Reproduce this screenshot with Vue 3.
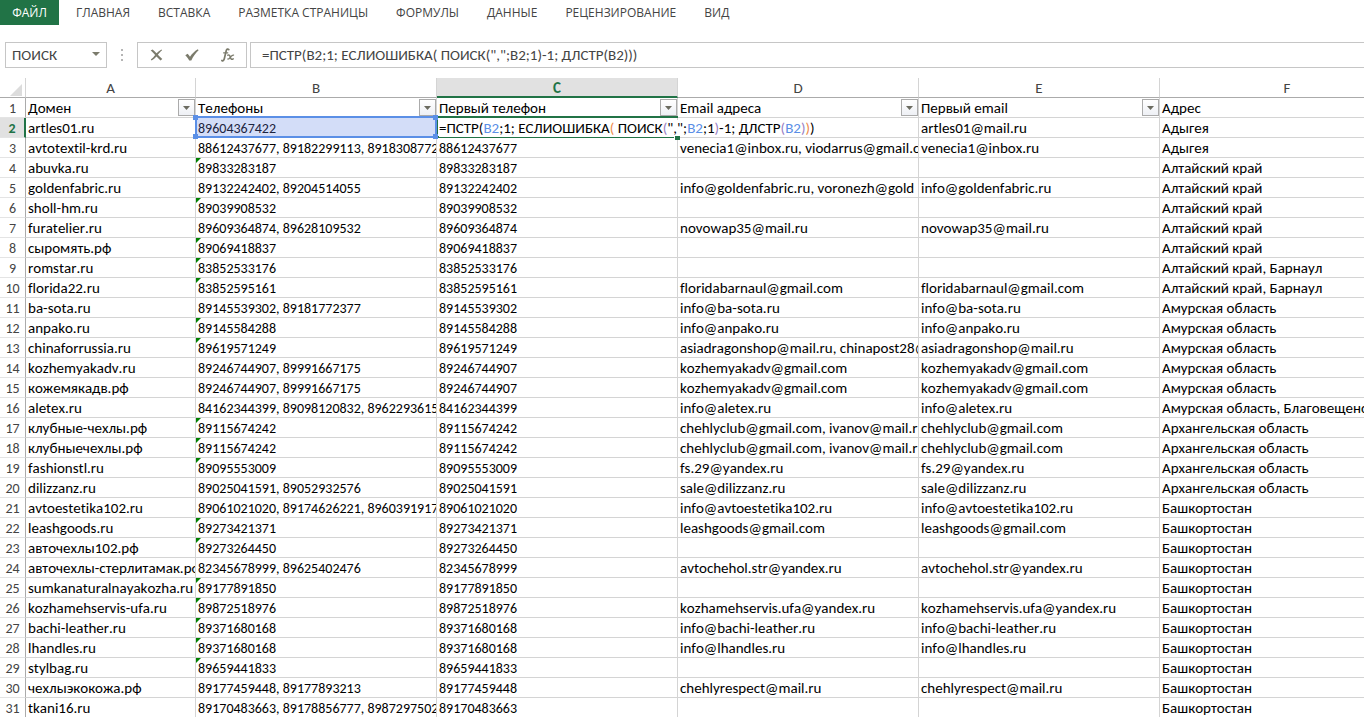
<script setup>
import { ref } from 'vue'

const tabs = ['ГЛАВНАЯ', 'ВСТАВКА', 'РАЗМЕТКА СТРАНИЦЫ', 'ФОРМУЛЫ', 'ДАННЫЕ', 'РЕЦЕНЗИРОВАНИЕ', 'ВИД']
const columns = ['A', 'B', 'C', 'D', 'E', 'F']
const headings = ['Домен', 'Телефоны', 'Первый телефон', 'Email адреса', 'Первый email', 'Адрес']

const formula = ref('=ПСТР(B2;1; ЕСЛИОШИБКА( ПОИСК(",";B2;1)-1; ДЛСТР(B2)))')
const tokens = [
  ['=ПСТР(', 'plain'], ['B2', 'cellref'], [';1; ЕСЛИОШИБКА', 'plain'], ['(', 'orange'],
  [' ПОИСК', 'plain'], ['(', 'violet'], ['",";', 'plain'], ['B2', 'cellref'], [';1', 'plain'],
  [')', 'violet'], ['-1; ДЛСТР', 'plain'], ['(', 'violet'], ['B2', 'cellref'], [')', 'violet'],
  [')', 'orange'], [')', 'plain'],
]

// domain, phones, emails, address
const source = [
  ['artles01.ru', '89604367422', 'artles01@mail.ru', 'Адыгея'],
  ['avtotextil-krd.ru', '88612437677, 89182299113, 8918308772', 'venecia1@inbox.ru, viodarrus@gmail.c', 'Адыгея'],
  ['abuvka.ru', '89833283187', '', 'Алтайский край'],
  ['goldenfabric.ru', '89132242402, 89204514055', 'info@goldenfabric.ru, voronezh@gold', 'Алтайский край'],
  ['sholl-hm.ru', '89039908532', '', 'Алтайский край'],
  ['furatelier.ru', '89609364874, 89628109532', 'novowap35@mail.ru', 'Алтайский край'],
  ['сыромять.рф', '89069418837', '', 'Алтайский край'],
  ['romstar.ru', '83852533176', '', 'Алтайский край, Барнаул'],
  ['florida22.ru', '83852595161', 'floridabarnaul@gmail.com', 'Алтайский край, Барнаул'],
  ['ba-sota.ru', '89145539302, 89181772377', 'info@ba-sota.ru', 'Амурская область'],
  ['anpako.ru', '89145584288', 'info@anpako.ru', 'Амурская область'],
  ['chinaforrussia.ru', '89619571249', 'asiadragonshop@mail.ru, chinapost28@', 'Амурская область'],
  ['kozhemyakadv.ru', '89246744907, 89991667175', 'kozhemyakadv@gmail.com', 'Амурская область'],
  ['кожемякадв.рф', '89246744907, 89991667175', 'kozhemyakadv@gmail.com', 'Амурская область'],
  ['aletex.ru', '84162344399, 89098120832, 8962293615', 'info@aletex.ru', 'Амурская область, Благовещенск'],
  ['клубные-чехлы.рф', '89115674242', 'chehlyclub@gmail.com, ivanov@mail.r', 'Архангельская область'],
  ['клубныечехлы.рф', '89115674242', 'chehlyclub@gmail.com, ivanov@mail.r', 'Архангельская область'],
  ['fashionstl.ru', '89095553009', 'fs.29@yandex.ru', 'Архангельская область'],
  ['dilizzanz.ru', '89025041591, 89052932576', 'sale@dilizzanz.ru', 'Архангельская область'],
  ['avtoestetika102.ru', '89061021020, 89174626221, 8960391917', 'info@avtoestetika102.ru', 'Башкортостан'],
  ['leashgoods.ru', '89273421371', 'leashgoods@gmail.com', 'Башкортостан'],
  ['авточехлы102.рф', '89273264450', '', 'Башкортостан'],
  ['авточехлы-стерлитамак.рф', '82345678999, 89625402476', 'avtochehol.str@yandex.ru', 'Башкортостан'],
  ['sumkanaturalnayakozha.ru', '89177891850', '', 'Башкортостан'],
  ['kozhamehservis-ufa.ru', '89872518976', 'kozhamehservis.ufa@yandex.ru', 'Башкортостан'],
  ['bachi-leather.ru', '89371680168', 'info@bachi-leather.ru', 'Башкортостан'],
  ['lhandles.ru', '89371680168', 'info@lhandles.ru', 'Башкортостан'],
  ['stylbag.ru', '89659441833', '', 'Башкортостан'],
  ['чехлыэкокожа.рф', '89177459448, 89177893213', 'chehlyrespect@mail.ru', 'Башкортостан'],
  ['tkani16.ru', '89170483663, 89178856777, 8987297502', '', 'Башкортостан'],
]
const first = (list) => list.split(', ')[0]
const rows = source.map(([domain, phones, emails, address], i) => ({
  number: i + 2,
  domain,
  phones,
  phone: first(phones),
  emails,
  email: first(emails),
  address,
  flagged: i > 0 && !phones.includes(','),
}))
</script>

<template>
  <div class="app">
    <nav class="ribbon" aria-label="Лента">
      <button class="tab file" type="button">ФАЙЛ</button>
      <div class="tabs">
        <button v-for="tab in tabs" :key="tab" class="tab" type="button">{{ tab }}</button>
      </div>
    </nav>

    <div class="bar">
      <div class="namebox">
        <select aria-label="Имя">
          <option>ПОИСК</option>
        </select>
        <svg class="caret" width="8" height="4" viewBox="0 0 8 4"><path d="M0 0h8L4 4z" fill="#7b7b6c" /></svg>
      </div>
      <svg class="grip" width="2" height="12" viewBox="0 0 2 12">
        <path d="M0 0h2v2H0zM0 5h2v2H0zM0 10h2v2H0z" fill="#b5b5b5" />
      </svg>
      <div class="actions">
        <button type="button" aria-label="Отмена">
          <svg width="13" height="12" viewBox="0 0 13 12">
            <path d="M.6 1.600 2.600.5C4 1.700 5.200 3 6.500 4.300 8 2.800 9.500 1.500 11.500.4l.6.8C10.300 2.700 9.200 4.100 7.900 5.800 9.200 7.200 10.500 8.500 12.300 9.900l-1.800 1.500C9.100 10.200 7.800 8.900 6.500 7.500 5 9.100 3.500 10.400 1.600 11.500L.8 10.600C2.600 9.200 3.900 7.700 5.100 6 3.800 4.400 2.500 3.100.6 1.600z" fill="#7b7b6c" />
          </svg>
        </button>
        <button type="button" aria-label="Ввод">
          <svg width="14" height="12" viewBox="0 0 14 12">
            <path d="M.3 6.200 2.600 4.800c1 1 1.700 1.900 2.400 3C7 4.800 9.400 2.300 12.800.3l.8.9C10.500 4 8.200 7.400 6.300 11.500H4.200C3.100 9.400 1.900 7.700.3 6.200z" fill="#7b7b6c" />
          </svg>
        </button>
        <button type="button" aria-label="Вставить функцию">
          <svg width="14" height="14" viewBox="0 0 14 14" fill="none" stroke="#7b7b6c" stroke-linecap="round">
            <path d="M7.800 1.600C6.900.6 5.700.9 5.200 2.800L3.300 10.800C2.900 12.500 1.900 13.300.9 12.500" stroke-width="1.700" />
            <path d="M2.600 4.800h4.200" stroke-width="1.200" />
            <path d="M6.800 7.200c1.400-.7 2 .2 2.500 1.900.5 1.900 1.200 2.800 2.900 1.800" stroke-width="1.500" />
            <path d="M12.600 7.100c-1.400-.3-2.100.7-3.100 2-.9 1.300-1.600 2.200-2.800 1.900" stroke-width="1.200" />
          </svg>
        </button>
      </div>
      <input v-model="formula" class="formula" type="text" aria-label="Строка формул" />
    </div>

    <main class="sheet">
      <table>
        <colgroup>
          <col class="w-number" />
          <col class="w-domain" />
          <col v-for="n in 4" :key="n" class="w-data" />
          <col class="w-address" />
        </colgroup>
        <thead>
          <tr>
            <th class="corner">
              <svg width="12" height="12" viewBox="0 0 12 12"><path d="M12 0v12H0z" fill="#dcdcdc" /></svg>
            </th>
            <th v-for="c in columns" :key="c" scope="col" :class="{ current: c === 'C' }">{{ c }}</th>
          </tr>
        </thead>
        <tbody>
          <tr>
            <th scope="row">1</th>
            <td v-for="(h, i) in headings" :key="h">
              {{ h }}
              <button v-if="i < 5" class="filter" type="button" :aria-label="'Фильтр: ' + h">
                <svg width="7" height="4" viewBox="0 0 7 4"><path d="M0 0h7L3.500 4z" fill="#6b6b60" /></svg>
              </button>
            </td>
          </tr>
          <tr v-for="r in rows" :key="r.number">
            <th scope="row" :class="{ current: r.number === 2 }">{{ r.number }}</th>
            <td>{{ r.domain }}</td>
            <td class="phone" :class="{ flagged: r.flagged, source: r.number === 2 }">
              {{ r.phones }}
              <span v-if="r.number === 2" class="frame"><i /><i /><i /><i /></span>
            </td>
            <td v-if="r.number === 2" class="editing">
              <span class="tokens"><span v-for="(t, i) in tokens" :key="i" :class="t[1]">{{ t[0] }}</span></span>
              <span class="outline"></span>
              <i class="handle"></i>
            </td>
            <td v-else class="phone">{{ r.phone }}</td>
            <td>{{ r.number === 2 ? '' : r.emails }}</td>
            <td>{{ r.email }}</td>
            <td>{{ r.address }}</td>
          </tr>
        </tbody>
      </table>
    </main>
  </div>
</template>

<style>
body {
  margin: 0;
  background: #fff;
}
</style>

<style scoped>
.app {
  display: flex;
  flex-direction: column;
  height: 100vh;
  overflow: hidden;
  font-family: Calibri, Carlito, Lato, "Noto Sans", sans-serif;
  font-size: 15px;
  font-kerning: none;
  font-variant-ligatures: none;
  color: #000;
}
button,
input,
select {
  margin: 0;
  padding: 0;
  border: 0;
  border-radius: 0;
  background: none;
  font: inherit;
  color: #444;
}
.ribbon {
  display: flex;
  flex: none;
  height: 25px;
}
.tabs {
  display: flex;
  gap: 28px;
  padding-left: 17px;
}
.tab {
  font-family: "Open Sans", "Noto Sans", sans-serif;
  font-size: 12px;
  white-space: nowrap;
}
.file {
  width: 59px;
  background: #217346;
  color: #fff;
}
.bar {
  display: flex;
  flex: none;
  align-items: center;
  height: 26px;
  margin: 17px 0 10px 5px;
}
.namebox,
.actions,
.formula {
  box-sizing: border-box;
  height: 26px;
  border: 1px solid #c6c6c6;
}
.namebox {
  display: flex;
  align-items: center;
  position: relative;
  width: 102px;
}
.namebox select {
  width: 100%;
  height: 100%;
  padding-left: 6px;
  appearance: none;
}
.caret {
  position: absolute;
  right: 6px;
  top: 9px;
  pointer-events: none;
}
.grip {
  margin: 0 14px;
}
.actions {
  display: flex;
  align-items: center;
  width: 110px;
  margin-right: 3px;
}
.actions button {
  display: flex;
  flex: 1;
  align-items: center;
  justify-content: center;
  height: 100%;
}
.formula {
  flex: 1;
  min-width: 0;
  padding-left: 11px;
  border-right: 0;
}
.sheet {
  flex: 1;
  min-height: 0;
  overflow: hidden;
}
table {
  width: 1415px;
  table-layout: fixed;
  border-collapse: separate;
  border-spacing: 0;
}
.w-number { width: 26px; }
.w-domain { width: 170px; }
.w-data { width: 241px; }
.w-address { width: 255px; }
th,
td {
  box-sizing: border-box;
  height: 20px;
  padding: 2px 0 0;
  border: 0 solid #d4d4d4;
  border-width: 0 1px 1px 0;
  line-height: 17px;
  white-space: nowrap;
}
td {
  position: relative;
  padding-left: 2px;
  overflow: hidden;
  text-align: left;
}
th {
  font-weight: 400;
  color: #444;
}
thead th {
  border-bottom-color: #ababab;
}
thead th.current {
  border-bottom: 2px solid #217346;
  background: #e1e1e1;
  color: #217346;
  font-weight: 700;
  line-height: 16px;
}
.corner svg {
  display: block;
  margin: 2px 3px 0 auto;
}
tbody th {
  border-right-color: #ababab;
  border-bottom-color: #e4e4e4;
}
tbody th.current {
  border-right: 2px solid #217346;
  background: #e1e1e1;
  color: #217346;
  font-weight: 700;
}
tbody th,
.phone {
  font-size: 14px;
}
.flagged::before {
  content: "";
  position: absolute;
  left: 0;
  top: 0;
  border-top: 5px solid #008000;
  border-right: 5px solid transparent;
}
.filter {
  display: flex;
  align-items: center;
  justify-content: center;
  position: absolute;
  right: 0;
  top: 1px;
  box-sizing: border-box;
  width: 17px;
  height: 17px;
  border: 1px solid #ababab;
  background: linear-gradient(#fff, #eef0f5);
}
.source {
  overflow: visible;
  background: #d3ddf8;
  color: #1c2440;
}
.frame {
  position: absolute;
  inset: -2px -1px -1px -1px;
  z-index: 3;
  border: 2px solid #5b8fe6;
}
.frame i {
  position: absolute;
  width: 5px;
  height: 5px;
  background: #5b8fe6;
}
.frame i:nth-child(1) { left: -4px; top: -3px; }
.frame i:nth-child(2) { right: -3px; top: -3px; }
.frame i:nth-child(3) { left: -4px; bottom: -3px; }
.frame i:nth-child(4) { right: -3px; bottom: -3px; }
.editing {
  overflow: visible;
}
.tokens {
  position: relative;
  z-index: 2;
  display: block;
  width: max-content;
  height: 17px;
  background: #fff;
}
.cellref { color: #5b8fe6; }
.orange { color: #ed8b4c; }
.violet { color: #9a7fc4; }
.outline {
  position: absolute;
  inset: -2px -1px -1px -1px;
  z-index: 1;
  border: 2px solid #217346;
  border-right: 0;
}
.handle {
  position: absolute;
  right: -3px;
  bottom: -3px;
  z-index: 2;
  width: 5px;
  height: 4px;
  border: 1px solid #fff;
  border-width: 1px 0 0 1px;
  background: #217346;
}
</style>
